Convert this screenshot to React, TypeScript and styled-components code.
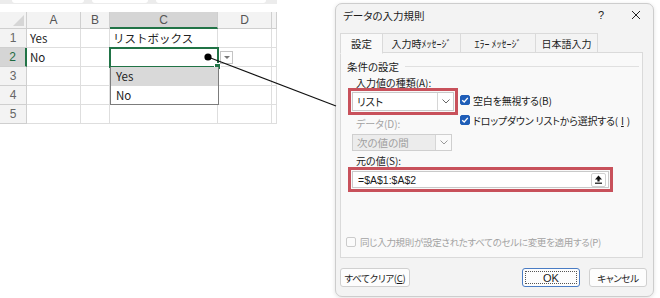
import React from 'react';
import styled, { createGlobalStyle } from 'styled-components';

export default function App() {
  return (
    <Page>
      <GlobalStyle />
      <SheetArea>
        <TopStrip>
          <StripTab $w={72} />
          <StripTab $w={56} />
          <StripTab $w={110} />
        </TopStrip>
        <GridWrap>
          <Grid>
            <Corner>
              <CornerMark />
            </Corner>
            {COLUMNS.map((c) => (
              <ColHead key={c} $sel={c === 'C'}>
                {c}
              </ColHead>
            ))}
            <ColHead $sel={false} />
            {ROWS.map((row, i) => (
              <React.Fragment key={i}>
                <RowHead $sel={i === 1}>{i + 1}</RowHead>
                {row.map((text, j) => (
                  <Cell key={j}>{text}</Cell>
                ))}
                <Cell />
              </React.Fragment>
            ))}
          </Grid>
          <SelFrame>
            <SelHandle />
          </SelFrame>
          <ArrowBtn>
            <ArrowTri />
          </ArrowBtn>
          <ListBox>
            <ListItem $hover>Yes</ListItem>
            <ListItem>No</ListItem>
          </ListBox>
        </GridWrap>
      </SheetArea>

      <Dialog>
        <TitleBar>
          <Title>データの入力規則</Title>
          <TitleIcons>
            <Help>?</Help>
            <svg width="10" height="10" viewBox="0 0 10 10">
              <path d="M1 1 L9 9 M9 1 L1 9" stroke="#222" strokeWidth="1" />
            </svg>
          </TitleIcons>
        </TitleBar>

        <Tabs>
          {TABS.map((t, i) => (
            <Tab key={t.label} $w={t.w} $active={i === 0}>
              {t.label}
            </Tab>
          ))}
        </Tabs>

        <Panel>
          <GroupHead>
            <span>条件の設定</span>
            <GroupLine />
          </GroupHead>
          <FieldLabel>入力値の種類(A):</FieldLabel>
          <TypeRow>
            <LeftCol>
              <RedFrame>
                <Select $w={102}>
                  <span>リスト</span>
                  <SelArrow>
                    <Chevron />
                  </SelArrow>
                </Select>
              </RedFrame>
              <SubLabel $disabled>データ(D):</SubLabel>
              <DisabledSelect>
                <span>次の値の間</span>
                <SelArrow $light>
                  <Chevron color="#9a9a9a" />
                </SelArrow>
              </DisabledSelect>
            </LeftCol>
            <CheckCol>
              <CheckRow>
                <CheckBox $on>
                  <Tick />
                </CheckBox>
                空白を無視する(B)
              </CheckRow>
              <CheckRow>
                <CheckBox $on>
                  <Tick />
                </CheckBox>
                ドロップダウン リストから選択する(<Under>I</Under>)
              </CheckRow>
            </CheckCol>
          </TypeRow>
          <FieldLabel>元の値(S):</FieldLabel>
          <SourceFrame>
            <SourceInput>
              <span>=$A$1:$A$2</span>
              <UploadBtn>
                <svg width="9" height="9" viewBox="0 0 9 9">
                  <path d="M4.5 0.5 L8 4.5 L5.6 4.5 L5.6 6.5 L3.4 6.5 L3.4 4.5 L1 4.5 Z" fill="#111" />
                  <rect x="1" y="7.6" width="7" height="1.2" fill="#111" />
                </svg>
              </UploadBtn>
            </SourceInput>
          </SourceFrame>
          <ApplyRow>
            <CheckBox />
            同じ入力規則が設定されたすべてのセルに変更を適用する(P)
          </ApplyRow>
        </Panel>

        <Footer>
          <Button $w={70}>
            すべてクリア(<Under>C</Under>)
          </Button>
          <Spacer />
          <Button $w={58} $primary>
            <Focus>OK</Focus>
          </Button>
          <Button $w={58}>キャンセル</Button>
        </Footer>
      </Dialog>

      <Overlay width="660" height="298">
        <line x1="208" y1="57" x2="336" y2="106" stroke="#111" strokeWidth="1.2" />
        <circle cx="208" cy="57" r="3.6" fill="#000" />
      </Overlay>
    </Page>
  );
}

function Chevron({ color = '#666' }: { color?: string }) {
  return (
    <svg width="8" height="5" viewBox="0 0 8 5">
      <path d="M0.5 0.5 L4 4 L7.5 0.5" fill="none" stroke={color} strokeWidth="1" />
    </svg>
  );
}

function Tick() {
  return (
    <svg width="8" height="8" viewBox="0 0 8 8">
      <path d="M1.2 4.2 L3.2 6 L6.8 1.8" fill="none" stroke="#fff" strokeWidth="1.3" />
    </svg>
  );
}

const COLUMNS = ['A', 'B', 'C', 'D'];

const ROWS = [
  ['Yes', '', 'リストボックス', ''],
  ['No', '', '', ''],
  ['', '', '', ''],
  ['', '', '', ''],
  ['', '', '', ''],
];

const TABS = [
  { label: '設定', w: 43 },
  { label: '入力時ﾒｯｾｰｼﾞ', w: 78 },
  { label: 'ｴﾗｰ ﾒｯｾｰｼﾞ', w: 75 },
  { label: '日本語入力', w: 62 },
];

const GlobalStyle = createGlobalStyle`
  html, body {
    margin: 0;
    padding: 0;
    background: #fff;
  }
  body {
    font-family: "Noto Sans CJK JP", "Noto Sans", sans-serif;
    color: #1b1b1b;
  }
`;

const Page = styled.div`
  position: relative;
  display: flex;
  width: 660px;
  height: 298px;
  overflow: hidden;
  background: #fff;
`;

const SheetArea = styled.div`
  width: 335px;
  flex-shrink: 0;
`;

const TopStrip = styled.div`
  display: flex;
  gap: 8px;
  width: 277px;
  height: 4px;
  padding-left: 12px;
  box-sizing: border-box;
  background: #ececec;
`;

const StripTab = styled.div<{ $w: number }>`
  width: ${(p) => p.$w}px;
  height: 3px;
  background: #fff;
  border-radius: 0 0 4px 4px;
`;

const GridWrap = styled.div`
  position: relative;
  margin-top: 8px;
  width: 277px;
`;

const Grid = styled.div`
  display: grid;
  grid-template-columns: 27px 54px 29px 108px 54px 5px;
  grid-template-rows: 17px repeat(5, 19px);
  font-size: 11.5px;
`;

const BaseCell = styled.div`
  box-sizing: border-box;
  border-right: 1px solid #dedede;
  border-bottom: 1px solid #dedede;
  overflow: hidden;
  white-space: nowrap;
`;

const Corner = styled(BaseCell)`
  position: relative;
  background: #f3f3f3;
  border-color: #cfcfcf;
`;

const CornerMark = styled.div`
  position: absolute;
  right: 2px;
  bottom: 2px;
  width: 0;
  height: 0;
  border-left: 11px solid transparent;
  border-bottom: 11px solid #d6d6d6;
`;

const ColHead = styled(BaseCell)<{ $sel?: boolean }>`
  display: flex;
  align-items: center;
  justify-content: center;
  background: ${(p) => (p.$sel ? '#d5d5d5' : '#f3f3f3')};
  border-right-color: #cfcfcf;
  border-bottom: ${(p) => (p.$sel ? '2px solid #217346' : '1px solid #cfcfcf')};
  color: #555;
  font-family: "Liberation Sans", Arial, sans-serif;
  font-size: 12px;
`;

const RowHead = styled(BaseCell)<{ $sel?: boolean }>`
  display: flex;
  align-items: center;
  justify-content: center;
  background: ${(p) => (p.$sel ? '#d5d5d5' : '#f3f3f3')};
  border-bottom-color: #cfcfcf;
  border-right: ${(p) => (p.$sel ? '2px solid #217346' : '1px solid #cfcfcf')};
  color: ${(p) => (p.$sel ? '#1e6b41' : '#666')};
  font-family: "Liberation Sans", Arial, sans-serif;
  font-size: 12px;
`;

const Cell = styled(BaseCell)`
  padding-left: 3px;
  line-height: 18px;
  color: #222;
`;

const SelFrame = styled.div`
  position: absolute;
  left: 109px;
  top: 35px;
  width: 110px;
  height: 21px;
  box-sizing: border-box;
  border: 2px solid #217346;
`;

const SelHandle = styled.div`
  position: absolute;
  right: -4px;
  bottom: -4px;
  width: 5px;
  height: 5px;
  background: #217346;
  border: 1px solid #fff;
`;

const ArrowBtn = styled.div`
  position: absolute;
  left: 220px;
  top: 39px;
  width: 13px;
  height: 13px;
  box-sizing: border-box;
  border: 1px solid #c4c4c4;
  background: #fff;
  display: flex;
  align-items: center;
  justify-content: center;
`;

const ArrowTri = styled.div`
  width: 0;
  height: 0;
  border-left: 3px solid transparent;
  border-right: 3px solid transparent;
  border-top: 3px solid #777;
`;

const ListBox = styled.div`
  position: absolute;
  left: 110px;
  top: 55px;
  width: 109px;
  box-sizing: border-box;
  border: 1px solid #7c7c7c;
  border-top: none;
  background: #fff;
`;

const ListItem = styled.div<{ $hover?: boolean }>`
  height: 18.5px;
  line-height: 18.5px;
  padding-left: 5px;
  font-size: 11.5px;
  color: #222;
  background: ${(p) => (p.$hover ? '#d9d9d9' : '#fff')};
`;

const Dialog = styled.div`
  display: flex;
  flex-direction: column;
  margin-top: 3px;
  width: 319px;
  height: 294px;
  box-sizing: border-box;
  background: #f3f3f3;
  border: 1px solid #cdcdcd;
  border-radius: 7px;
  box-shadow: 0 1px 4px rgba(0, 0, 0, 0.12);
  font-size: 10px;
  font-feature-settings: "palt";
`;

const TitleBar = styled.div`
  display: flex;
  align-items: center;
  height: 22px;
  padding: 0 12px 0 7px;
`;

const Title = styled.div`
  font-size: 10.5px;
  flex: 1;
`;

const TitleIcons = styled.div`
  display: flex;
  align-items: center;
  gap: 27px;
`;

const Help = styled.span`
  font-family: "Liberation Sans", Arial, sans-serif;
  font-size: 11px;
`;

const Tabs = styled.div`
  display: flex;
  margin: 7px 0 0 4px;
  height: 20px;
  position: relative;
  z-index: 1;
`;

const Tab = styled.div<{ $w: number; $active?: boolean }>`
  width: ${(p) => p.$w}px;
  box-sizing: border-box;
  display: flex;
  align-items: center;
  justify-content: center;
  border: 1px solid #dadada;
  border-bottom: ${(p) => (p.$active ? '1px solid #f9f9f9' : '1px solid #dadada')};
  border-left: ${(p) => (p.$active ? '1px solid #dadada' : 'none')};
  background: ${(p) => (p.$active ? '#f9f9f9' : '#f3f3f3')};
  font-size: ${(p) => (p.$active ? '10.5px' : '10px')};
  height: ${(p) => (p.$active ? '21px' : '20px')};
`;

const Panel = styled.div`
  display: flex;
  flex-direction: column;
  margin: -1px 10px 0 4px;
  height: 206px;
  box-sizing: border-box;
  background: #f9f9f9;
  border: 1px solid #dadada;
  padding-bottom: 10px;
`;

const GroupHead = styled.div`
  display: flex;
  align-items: center;
  gap: 6px;
  margin: 7px 3px 0 6px;
  height: 13px;
  font-size: 10.5px;
`;

const GroupLine = styled.div`
  flex: 1;
  height: 1px;
  background: #e0e0e0;
`;

const FieldLabel = styled.div`
  margin: 5px 0 0 15px;
  height: 10px;
  line-height: 10px;
  font-size: 10px;
`;

const SubLabel = styled.div<{ $disabled?: boolean }>`
  margin: 4px 0 0 8px;
  height: 10px;
  line-height: 10px;
  color: ${(p) => (p.$disabled ? '#a3a3a3' : '#1b1b1b')};
`;

const TypeRow = styled.div`
  display: flex;
  margin-left: 7px;
`;

const LeftCol = styled.div`
  display: flex;
  flex-direction: column;
`;

const RedFrame = styled.div`
  display: flex;
  padding: 1px;
  border: 3px solid #c8515b;
`;

const Select = styled.div<{ $w: number }>`
  display: flex;
  align-items: center;
  justify-content: space-between;
  width: ${(p) => p.$w}px;
  height: 19px;
  box-sizing: border-box;
  padding-left: 4px;
  background: #fff;
  border: 1px solid #c9c9c9;
  font-size: 10.5px;
`;

const SelArrow = styled.div<{ $light?: boolean }>`
  display: flex;
  align-items: center;
  justify-content: center;
  width: 15px;
  height: 100%;
  border-left: 1px solid #d6d6d6;
  background: ${(p) => (p.$light ? '#fafafa' : '#fff')};
`;

const DisabledSelect = styled.div`
  display: flex;
  align-items: center;
  justify-content: space-between;
  margin: 5px 0 0 4px;
  width: 100px;
  height: 17px;
  box-sizing: border-box;
  padding-left: 4px;
  background: #ececec;
  border: 1px solid #cfcfcf;
  color: #a0a0a0;
  font-size: 10.5px;
`;

const CheckCol = styled.div`
  display: flex;
  flex-direction: column;
  gap: 10px;
  margin: 7px 0 0 2px;
`;

const CheckRow = styled.div`
  display: flex;
  align-items: center;
  gap: 3px;
  height: 10px;
  font-size: 10px;
  letter-spacing: -0.2px;
  white-space: nowrap;
`;

const Under = styled.span`
  text-decoration: underline;
`;

const CheckBox = styled.div<{ $on?: boolean }>`
  display: flex;
  align-items: center;
  justify-content: center;
  width: 10px;
  height: 10px;
  box-sizing: border-box;
  border-radius: 2px;
  background: ${(p) => (p.$on ? '#1f5eb8' : '#fbfbfb')};
  border: 1px solid ${(p) => (p.$on ? '#1f5eb8' : '#cbcbcb')};
  flex-shrink: 0;
`;

const SourceFrame = styled(RedFrame)`
  margin: 1px 0 0 7px;
  width: 265px;
  box-sizing: border-box;
`;

const SourceInput = styled.div`
  flex: 1;
  display: flex;
  align-items: center;
  justify-content: space-between;
  height: 17px;
  box-sizing: border-box;
  padding: 0 2px 0 5px;
  background: #fff;
  border: 1px solid #c9c9c9;
  font-family: "Liberation Sans", Arial, sans-serif;
  font-size: 10.5px;
`;

const UploadBtn = styled.div`
  display: flex;
  align-items: center;
  justify-content: center;
  width: 15px;
  height: 14px;
  box-sizing: border-box;
  border: 1px solid #d0d0d0;
  border-radius: 2px;
  background: #fff;
`;

const ApplyRow = styled.div`
  display: flex;
  align-items: center;
  gap: 4px;
  margin: auto 0 0 5px;
  height: 10px;
  color: #a3a3a3;
  font-size: 9.5px;
  letter-spacing: -0.3px;
  white-space: nowrap;
`;

const Footer = styled.div`
  display: flex;
  gap: 9px;
  margin: 10px 6px 0 4px;
`;

const Spacer = styled.div`
  flex: 1;
`;

const Button = styled.div<{ $w: number; $primary?: boolean }>`
  display: flex;
  align-items: center;
  justify-content: center;
  width: ${(p) => p.$w}px;
  height: 19px;
  box-sizing: border-box;
  padding: 2px;
  background: #fdfdfd;
  border: 1px solid ${(p) => (p.$primary ? '#4a7cc4' : '#d0d0d0')};
  border-radius: 3px;
  font-size: 9.5px;
  letter-spacing: -0.3px;
  white-space: nowrap;
`;

const Focus = styled.div`
  flex: 1;
  align-self: stretch;
  display: flex;
  align-items: center;
  justify-content: center;
  border: 1px dotted #555;
  font-family: "Liberation Sans", Arial, sans-serif;
  font-size: 11px;
  letter-spacing: 0;
`;

const Overlay = styled.svg`
  position: absolute;
  left: 0;
  top: 0;
  pointer-events: none;
`;
